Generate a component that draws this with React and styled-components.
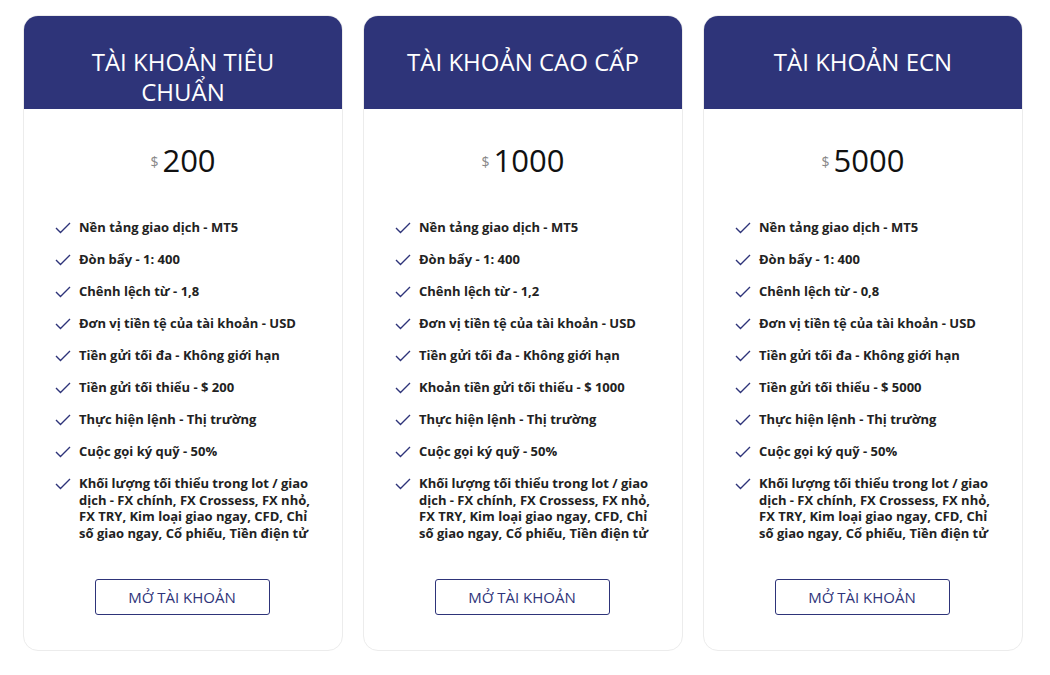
import React from 'react';
import styled, { createGlobalStyle } from 'styled-components';

const GlobalStyle = createGlobalStyle`
    body {
        margin: 0;
        background: #fff;
        font-family: "Open Sans", "Noto Sans", sans-serif;
    }
`;

const plans = [
    {
        title: 'Tài khoản tiêu chuẩn',
        price: '200',
        features: [
            'Nền tảng giao dịch - MT5',
            'Đòn bẩy - 1: 400',
            'Chênh lệch từ - 1,8',
            'Đơn vị tiền tệ của tài khoản - USD',
            'Tiền gửi tối đa - Không giới hạn',
            'Tiền gửi tối thiểu - $ 200',
            'Thực hiện lệnh - Thị trường',
            'Cuộc gọi ký quỹ - 50%',
            'Khối lượng tối thiểu trong lot / giao dịch - FX chính, FX Crossess, FX nhỏ, FX TRY, Kim loại giao ngay, CFD, Chỉ số giao ngay, Cổ phiếu, Tiền điện tử',
        ],
    },
    {
        title: 'Tài khoản cao cấp',
        price: '1000',
        features: [
            'Nền tảng giao dịch - MT5',
            'Đòn bẩy - 1: 400',
            'Chênh lệch từ - 1,2',
            'Đơn vị tiền tệ của tài khoản - USD',
            'Tiền gửi tối đa - Không giới hạn',
            'Khoản tiền gửi tối thiểu - $ 1000',
            'Thực hiện lệnh - Thị trường',
            'Cuộc gọi ký quỹ - 50%',
            'Khối lượng tối thiểu trong lot / giao dịch - FX chính, FX Crossess, FX nhỏ, FX TRY, Kim loại giao ngay, CFD, Chỉ số giao ngay, Cổ phiếu, Tiền điện tử',
        ],
    },
    {
        title: 'Tài khoản ECN',
        price: '5000',
        features: [
            'Nền tảng giao dịch - MT5',
            'Đòn bẩy - 1: 400',
            'Chênh lệch từ - 0,8',
            'Đơn vị tiền tệ của tài khoản - USD',
            'Tiền gửi tối đa - Không giới hạn',
            'Tiền gửi tối thiểu - $ 5000',
            'Thực hiện lệnh - Thị trường',
            'Cuộc gọi ký quỹ - 50%',
            'Khối lượng tối thiểu trong lot / giao dịch - FX chính, FX Crossess, FX nhỏ, FX TRY, Kim loại giao ngay, CFD, Chỉ số giao ngay, Cổ phiếu, Tiền điện tử',
        ],
    },
];

const Check = () => (
    <CheckIcon viewBox="0 0 16 12" width="16" height="12">
        <polyline points="1,6 5.5,10.5 15,1" fill="none" stroke="#2e3479" strokeWidth="1.4" />
    </CheckIcon>
);

const PlanCard = ({ title, price, features }) => (
    <Card>
        <Header>{title}</Header>
        <Price>
            <Currency>$</Currency>
            <Amount>{price}</Amount>
        </Price>
        <FeatureList>
            {features.map((f, i) => (
                <Feature key={i}>
                    <Check />
                    <span>{f}</span>
                </Feature>
            ))}
        </FeatureList>
        <Footer>
            <OpenButton>Mở tài khoản</OpenButton>
        </Footer>
    </Card>
);

export default function App() {
    return (
        <>
            <GlobalStyle />
            <Row>
                {plans.map((p) => (
                    <PlanCard key={p.title} {...p} />
                ))}
            </Row>
        </>
    );
}

const Row = styled.div`
    display: flex;
    gap: 20px;
    padding: 15px 23px;
    align-items: stretch;
`;

const Card = styled.div`
    width: 320px;
    height: 636px;
    box-sizing: border-box;
    border: 1px solid #ececec;
    border-radius: 15px;
    overflow: hidden;
    display: flex;
    flex-direction: column;
    background: #fff;
`;

const Header = styled.div`
    height: 94px;
    box-sizing: border-box;
    margin: -1px -1px 0;
    padding: 32px 40px 0;
    background: #2e3479;
    color: #fff;
    text-transform: uppercase;
    text-align: center;
    font-size: 24px;
    line-height: 30px;
    font-weight: 400;
`;

const Price = styled.div`
    display: flex;
    justify-content: center;
    align-items: center;
    margin-top: 31px;
    height: 40px;
`;

const Currency = styled.span`
    font-size: 14px;
    color: #888;
    margin-right: 4px;
    margin-top: 2px;
`;

const Amount = styled.span`
    font-size: 31px;
    font-weight: 400;
    color: #111;
`;

const FeatureList = styled.ul`
    list-style: none;
    margin: 39px 0 0;
    padding: 0 32px;
    flex: 1;
`;

const Feature = styled.li`
    display: flex;
    align-items: flex-start;
    gap: 8px;
    font-size: 13px;
    line-height: 16.5px;
    font-weight: 700;
    color: #222;
    margin-bottom: 15.5px;
`;

const CheckIcon = styled.svg`
    flex: none;
    margin-top: 3px;
    margin-left: -1px;
`;

const Footer = styled.div`
    display: flex;
    justify-content: center;
    padding: 0 2px 35px 0;
`;

const OpenButton = styled.button`
    width: 175px;
    height: 36px;
    border: 1px solid #2e3479;
    border-radius: 3px;
    background: #fff;
    color: #2e3479;
    font-family: "Open Sans", "Noto Sans", sans-serif;
    font-size: 15px;
    text-transform: uppercase;
    cursor: pointer;
`;
